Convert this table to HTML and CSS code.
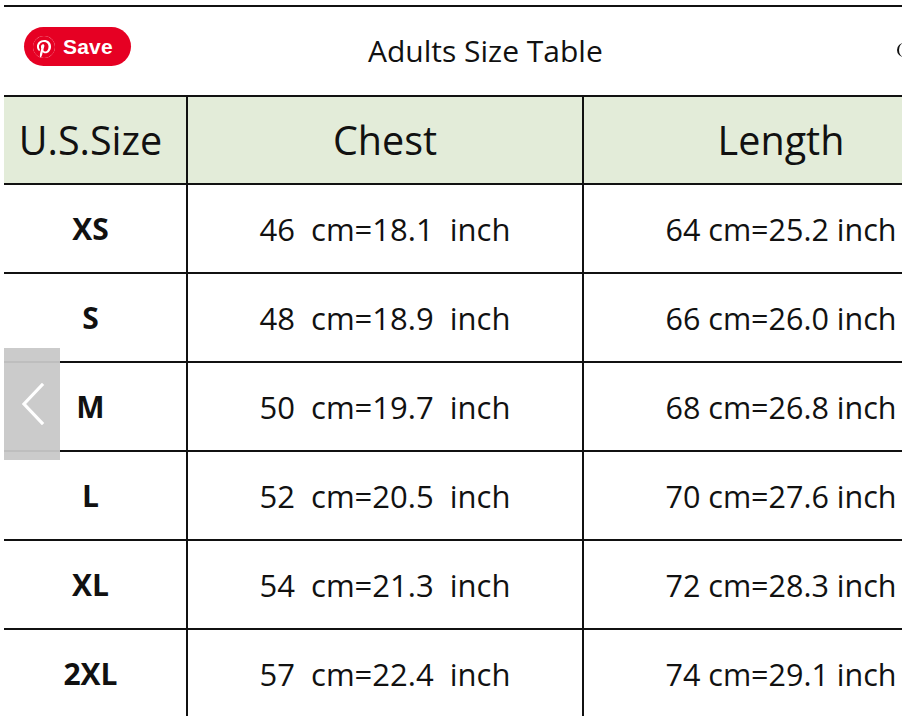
FILE: index.html
```html
<!DOCTYPE html>
<html>
<head>
<meta charset="utf-8">
<link rel="stylesheet" href="styles.css">
</head>
<body>
<div class="page">
  <div class="sheet">
    <div class="title-bar">
      <span class="title">Adults Size Table</span>
      <span class="next-title" aria-hidden="true"></span>
    </div>
    <table class="sizes">
      <colgroup>
        <col class="c1"><col class="c2"><col class="c3">
      </colgroup>
      <thead>
        <tr><th class="size-h">U.S.Size</th><th>Chest</th><th>Length</th></tr>
      </thead>
      <tbody>
        <tr><td class="size">XS</td><td>46  cm=18.1  inch</td><td class="len">64 cm=25.2 inch</td></tr>
        <tr><td class="size">S</td><td>48  cm=18.9  inch</td><td class="len">66 cm=26.0 inch</td></tr>
        <tr><td class="size">M</td><td>50  cm=19.7  inch</td><td class="len">68 cm=26.8 inch</td></tr>
        <tr><td class="size">L</td><td>52  cm=20.5  inch</td><td class="len">70 cm=27.6 inch</td></tr>
        <tr><td class="size">XL</td><td>54  cm=21.3  inch</td><td class="len">72 cm=28.3 inch</td></tr>
        <tr><td class="size">2XL</td><td>57  cm=22.4  inch</td><td class="len">74 cm=29.1 inch</td></tr>
      </tbody>
    </table>
  </div>

  <a class="pin-save" href="#">
    <svg class="pin-logo" viewBox="0 0 24 24" width="22" height="22">
      <circle cx="12" cy="12" r="12" fill="#fff"/>
      <path fill="#e60023" d="M12 0C5.373 0 0 5.372 0 12c0 5.084 3.163 9.426 7.627 11.174-.105-.949-.2-2.405.042-3.441.218-.937 1.407-5.965 1.407-5.965s-.359-.719-.359-1.782c0-1.668.967-2.914 2.171-2.914 1.023 0 1.518.769 1.518 1.690 0 1.029-.655 2.568-.994 3.995-.283 1.194.599 2.169 1.777 2.169 2.133 0 3.772-2.249 3.772-5.495 0-2.873-2.064-4.882-5.012-4.882-3.414 0-5.418 2.561-5.418 5.207 0 1.031.397 2.138.893 2.738a.36.36 0 0 1 .083.345l-.333 1.360c-.053.220-.174.267-.402.161-1.499-.698-2.436-2.889-2.436-4.649 0-3.785 2.750-7.262 7.929-7.262 4.163 0 7.398 2.967 7.398 6.931 0 4.136-2.607 7.464-6.227 7.464-1.216 0-2.359-.631-2.750-1.378l-.748 2.853c-.271 1.043-1.002 2.350-1.492 3.146C9.570 23.812 10.763 24 12 24c6.627 0 12-5.373 12-12 0-6.628-5.373-12-12-12z"/>
    </svg>
    <span class="pin-text">Save</span>
  </a>

  <button class="prev" type="button" aria-label="Previous">
    <svg viewBox="0 0 24 42" width="24" height="42">
      <polyline points="21,2 3,21 21,40" fill="none" stroke="#fff" stroke-width="3.2" stroke-linecap="square"/>
    </svg>
  </button>
</div>
</body>
</html>
```

FILE: styles.css
```css
html, body {
  margin: 0;
  padding: 0;
  background: #fff;
  overflow: hidden;
}

.page {
  position: relative;
  width: 902px;
  height: 716px;
  overflow: hidden;
}

.sheet {
  margin-top: 5px;
  margin-left: 4px;
  width: 975px;
  border-top: 2px solid #111;
}

.title-bar {
  height: 88px;
  display: flex;
  align-items: center;
  font-family: "Open Sans", "Noto Sans", sans-serif;
  color: #111;
}

.title {
  flex: none;
  white-space: nowrap;
  font-size: 30px;
  margin-left: 364px;
  padding-bottom: 2px;
}

.next-title {
  flex: none;
  width: 14px;
  height: 14px;
  margin-left: auto;
  margin-right: 68px;
  margin-bottom: 2px;
  border-left: 2.5px solid #111;
  border-radius: 50%;
  box-sizing: border-box;
}

.sizes {
  border-collapse: collapse;
  table-layout: fixed;
  width: 975px;
  font-family: "Open Sans", "Noto Sans", sans-serif;
  color: #111;
}

.c1 { width: 183px; }
.c2 { width: 396px; }
.c3 { width: 396px; }

.sizes th,
.sizes td {
  border: 2px solid #111;
  text-align: center;
  vertical-align: middle;
  padding: 0;
  white-space: pre;
}

.sizes tr > :first-child { border-left: none; }

.sizes thead th {
  background: #e3ecd9;
  font-weight: normal;
  font-size: 39.5px;
  height: 86px;
}

.sizes tbody td {
  height: 87px;
  font-size: 31px;
}

.sizes tbody td.len {
  font-size: 30.5px;
}

.sizes tbody tr:last-child td {
  border-bottom-color: #777;
}

.sizes .size-h,
.sizes .size {
  padding-right: 9px;
}

.sizes .size {
  font-weight: bold;
  font-size: 30px;
}

.pin-save {
  position: absolute;
  left: 24px;
  top: 27px;
  width: 107px;
  height: 39px;
  border-radius: 20px;
  background: #e60023;
  display: flex;
  align-items: center;
  gap: 8px;
  padding-left: 9px;
  box-sizing: border-box;
  text-decoration: none;
}

.pin-logo { display: block; flex: none; }

.pin-text {
  font-family: "Liberation Sans", Arial, sans-serif;
  font-weight: bold;
  font-size: 21px;
  color: #fff;
  letter-spacing: 0.2px;
}

.prev {
  position: absolute;
  left: 4px;
  top: 348px;
  width: 56px;
  height: 112px;
  border: none;
  margin: 0;
  background: rgba(200, 200, 200, 0.95);
  display: flex;
  align-items: center;
  justify-content: flex-start;
  padding: 0 0 0 17px;
  box-sizing: border-box;
}

.prev svg { display: block; }
```
